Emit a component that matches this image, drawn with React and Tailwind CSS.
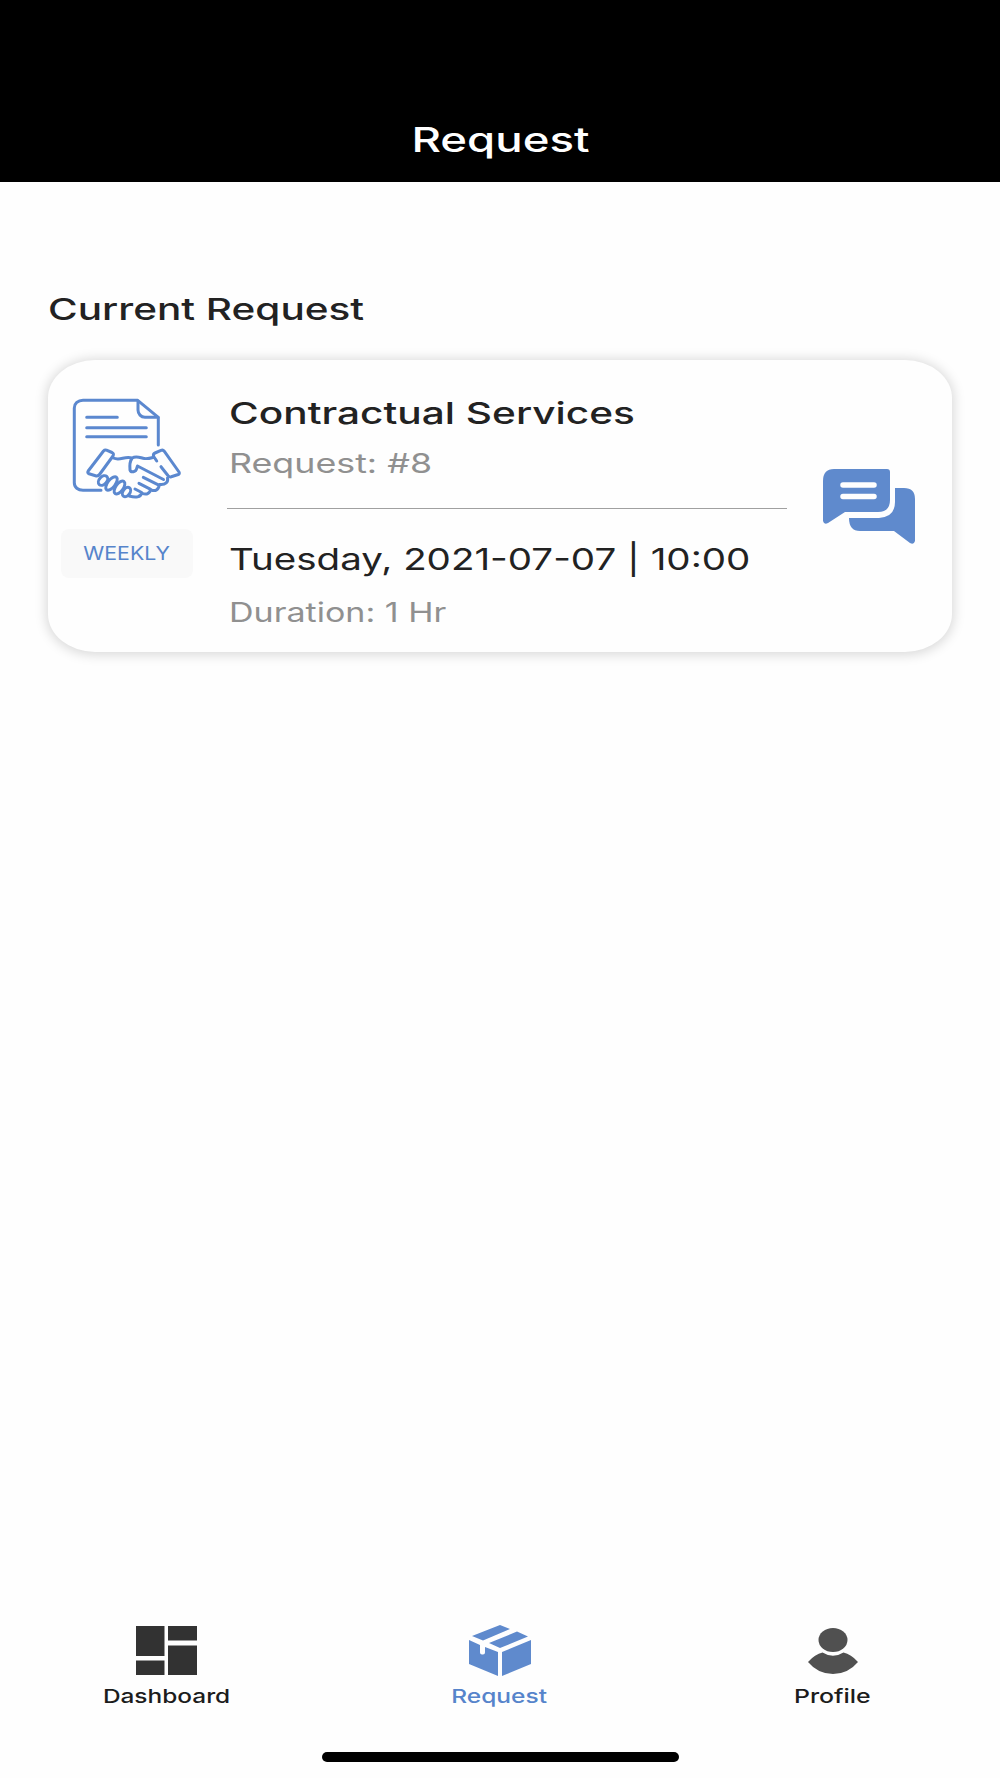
import React from 'react';

const ContractIcon = () => (
  <svg
    width="110"
    height="102"
    viewBox="0 0 110 102"
    fill="none"
    stroke="#5b88cf"
    strokeWidth="3"
    strokeLinecap="round"
    strokeLinejoin="round"
  >
    {/* Document */}
    <path d="M29 92.300H11c-5 0-8.700-3-8.700-7.500V10c0-4.500 3.700-7.700 8.700-7.700h54.700l20.600 17V47" />
    <path d="M66 3v9c0 4 3 7.300 7 7.300h13" />
    <path d="M14.700 19.300h30.600M14.700 29.700h59.600M14.700 38.700h59.600" />
    {/* Cuffs */}
    <path d="M34.500 52.200l5.500 2.300q2.300 1.200 1 3.500L27.500 76.500q-1.500 2-4 1.200L17 75.800q-2-.8-.8-2.800L31.500 53q1.300-1.400 3-.8z" />
    <path d="M84.700 63l-3-4.500q-1-2.500 1.300-3.500l6-2.600q2-.8 3.200.8l14.800 20.800q1 1.800-.8 2.500l-7 2.300q-2 .6-3.300-1.300L89 68.700" />
    {/* Hands */}
    <path d="M41.300 60c7 3.500 11-2.500 18.700 0 4-2 6-1 11 .3 4 1 7 0 10.500-1" />
    <path d="M60 60.500c-2.500 3-2.500 6-2 11.500 1 3 6 2 6.700-1.500l.8-2.500 26 13.500M95.500 80c1 4-2 7-7.500 6.500M71.300 79.300l16 8c-1 5-4.300 6.200-8.300 4.500M67 85.300l11.700 6c-1 5-4.700 5.700-9 3.700M63 91l6.700 3.500c-.7 5-6 5.500-12.500 3.500" />
    <ellipse cx="31" cy="82.500" rx="3.800" ry="5.500" transform="rotate(42 31 82.500)" />
    <ellipse cx="39.500" cy="85.500" rx="3.800" ry="8" transform="rotate(38 39.500 85.500)" />
    <ellipse cx="47.500" cy="89.500" rx="3.800" ry="7.500" transform="rotate(36 47.500 89.500)" />
    <ellipse cx="54.500" cy="94" rx="3.500" ry="5.200" transform="rotate(34 54.500 94)" />
  </svg>
);

const ChatIcon = () => (
  <svg width="92" height="75" viewBox="0 0 92 75" fill="#5f8acd">
    <path d="M11 0H64q3 0 3 3V31q0 12-12 12H22L5 54q-4 2-5-2V12Q0 0 11 0Z" />
    <path d="M72 19H81q11 0 11 11V72q-1 4-5 2L71 62H37Q26 62 26 49H56Q72 48 72 33Z" />
    <path d="M20 16H51M20 27.500H51" stroke="#fefefe" strokeWidth="5.500" strokeLinecap="round" />
  </svg>
);

const DashboardIcon = () => (
  <svg width="61" height="49" viewBox="0 0 61 49" fill="#323232">
    <path d="M0 0h28.500v30H0zM0 34.500h28.500V49H0zM32 0h29v14.500H32zM32 19.500h29V49H32z" />
  </svg>
);

const BoxIcon = () => (
  <svg width="62" height="51" viewBox="0 0 62 51" fill="#5f8acd">
    <path d="M3 11 31 0 41 4 14 15.500ZM20 18 48 6.500 59 11.500 31 23ZM0 15 11 20V27.500q0 2 2 2h1q2 0 2-2V22L29 27V51L0 39ZM33 27 62 15V39L33 51Z" />
  </svg>
);

const ProfileIcon = () => (
  <svg width="50" height="46" viewBox="0 0 50 46" fill="#505050">
    <ellipse cx="25" cy="12" rx="14.500" ry="12" />
    <path d="M0 34Q7 26 14.500 24.500 25 31 35.500 24.500 43 26 50 34 40 46 25 46 10 46 0 34Z" />
  </svg>
);

const tabs = [
  { label: 'Dashboard', icon: DashboardIcon, color: 'text-[#1c1c1c]', stretch: 'scale-x-[1.285]' },
  { label: 'Request', icon: BoxIcon, color: 'text-[#5684cb]', stretch: 'scale-x-[1.29]' },
  { label: 'Profile', icon: ProfileIcon, color: 'text-[#1c1c1c]', stretch: 'scale-x-[1.31]' },
];

const RequestCard = () => (
  <div className="mx-12 mt-[25px] flex h-[292px] rounded-[47px/38px] bg-[#fefefe] shadow-[0_1px_12px_2px_rgba(0,0,0,0.15)]">
    <div className="w-[181px] shrink-0 pt-[38px]">
      <div className="ml-6">
        <ContractIcon />
      </div>
      <div className="ml-[13px] mt-[29px] flex h-[49px] w-[132px] items-center justify-center rounded-lg bg-[#f9f9f9] pt-0.5 text-[19px] text-[#5684cb]">
        <span className="scale-x-[1.12]">WEEKLY</span>
      </div>
    </div>

    <div className="w-[558px] shrink-0 whitespace-nowrap pt-[31px]">
      <h3 className="h-[44px] w-fit origin-left scale-x-[1.353] text-[30px] font-medium leading-[44px] text-[#222]">
        Contractual Services
      </h3>
      <p className="mt-[9px] h-[40px] w-fit origin-left scale-x-[1.325] text-[27px] leading-[40px] text-[#909090]">
        Request: #8
      </p>
      <div className="-ml-[2px] mt-[24px] h-px w-[560px] bg-[#a0a0a0]" />
      <p className="mt-[28px] h-[44px] w-fit origin-left scale-x-[1.284] text-[30px] leading-[44px] text-[#222]">
        Tuesday, 2021-07-07 | 10:00
      </p>
      <p className="mt-[12px] h-[40px] w-fit origin-left scale-x-[1.26] text-[27px] leading-[40px] text-[#909090]">
        Duration: 1 Hr
      </p>
    </div>

    <button className="ml-9 mt-[109px] h-[75px]">
      <ChatIcon />
    </button>
  </div>
);

const App = () => {
  return (
    <div className="flex h-[1778px] w-[1000px] flex-col overflow-hidden bg-[#fefefe] font-['Inter',sans-serif]">
      {/* Header */}
      <header className="flex h-[182px] items-end justify-center bg-black pb-[17px]">
        <h1 className="scale-x-[1.34] text-[34px] font-medium leading-[50px] text-white">Request</h1>
      </header>

      {/* Current request */}
      <main className="flex-1 pt-[105px]">
        <h2 className="ml-12 h-[48px] w-fit origin-left scale-x-[1.35] text-[30px] font-medium leading-[44px] text-[#222]">
          Current Request
        </h2>
        <RequestCard />
      </main>

      {/* Tab bar */}
      <nav className="flex h-[127px] w-[999px]">
        {tabs.map(({ label, icon: Icon, color, stretch }) => (
          <button key={label} className="flex w-1/3 flex-col items-center">
            <span className="flex h-[51px] items-center">
              <Icon />
            </span>
            <span className={`mt-[7px] text-[19px] font-medium leading-7 ${color} ${stretch}`}>{label}</span>
          </button>
        ))}
      </nav>
      <div className="mx-auto mb-4 h-[10px] w-[357px] rounded-full bg-black" />
    </div>
  );
};

export default App;
